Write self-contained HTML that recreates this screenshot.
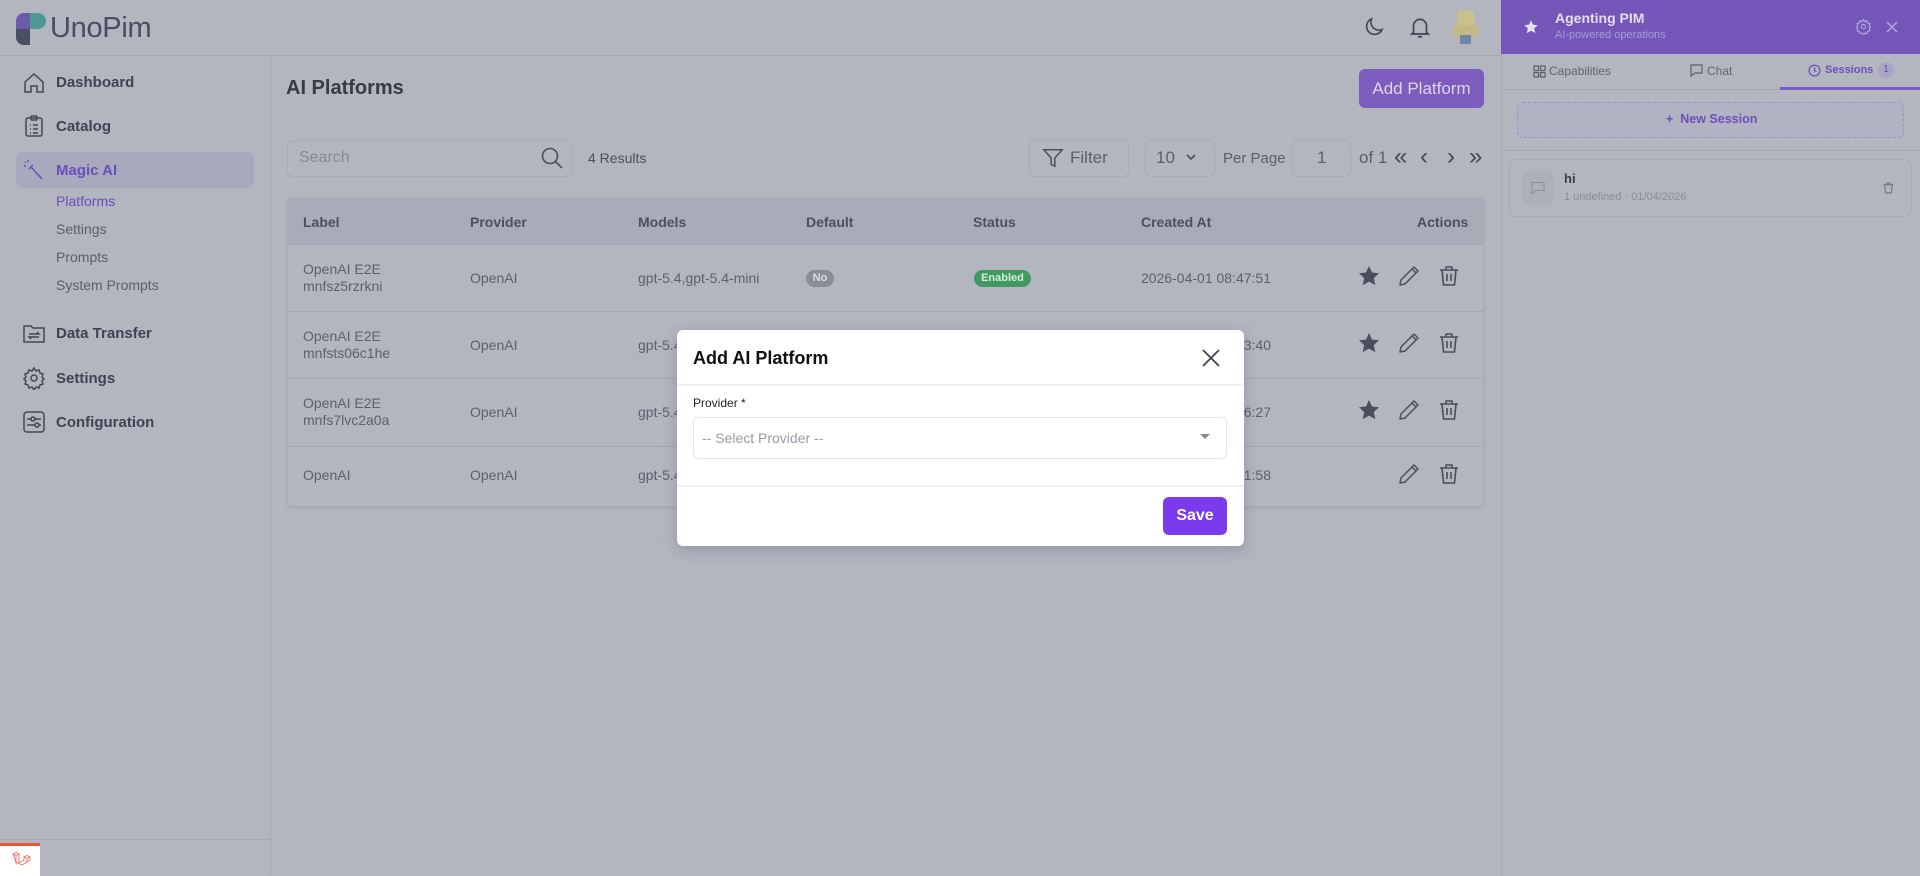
<!DOCTYPE html>
<html><head><meta charset="utf-8"><style>
*{box-sizing:border-box;margin:0;padding:0}
body{width:1920px;height:876px;overflow:hidden;background:#b3b5bf;font-family:"Liberation Sans",sans-serif;color:#474c5a;position:relative}
.a{position:absolute}
.t{white-space:nowrap}
svg{display:block}
.nav{position:absolute;left:56px;font-size:15px;color:#3f4452;font-weight:bold}
.sub{position:absolute;left:56px;font-size:14px;color:#5a5f6c}
.ic{position:absolute;left:22px}
.cell{position:absolute;font-size:14px;color:#5c616e;line-height:17px}
.hd{position:absolute;font-size:14px;font-weight:bold;color:#4b505d}
.box{position:absolute;border:1px solid #a8aab5;border-radius:6px}
</style></head><body>
<!-- header -->
<div class="a" style="left:0;top:55px;width:1501px;height:1px;background:#a6a8b3"></div>
<svg class="a" style="left:16px;top:13px" width="30" height="32" viewBox="0 0 30 32"><path d="M0 8a8 8 0 0 1 8-8h6v32H8a8 8 0 0 1-8-8z" fill="#6a5aa8"/><path d="M0 16h14v16H8a8 8 0 0 1-8-8z" fill="#4a4f62"/><path d="M14 0h8a8 8 0 0 1 0 16h-8z" fill="#4d9a92"/></svg>
<div class="a t" style="left:50px;top:12px;font-size:29px;color:#474e64;letter-spacing:-0.3px">UnoPim</div>
<svg class="a" style="left:1362px;top:15px" width="24" height="24" viewBox="0 0 24 24" fill="none" stroke="#3f4657" stroke-width="1.6"><path d="M20 14.5A8 8 0 0 1 9.5 4a8 8 0 1 0 10.5 10.5z"/></svg>
<svg class="a" style="left:1407px;top:14px" width="26" height="26" viewBox="0 0 24 24" fill="none" stroke="#3f4657" stroke-width="1.6"><path d="M6 17V11a6 6 0 0 1 12 0v6l1.5 1.5h-15z"/><path d="M10 21h4"/></svg>
<div class="a" style="left:1457px;top:11px;width:17px;height:15px;background:#c9c08a;border-radius:3px"></div>
<div class="a" style="left:1453px;top:25px;width:25px;height:11px;background:#c2b985;border-radius:3px"></div>
<div class="a" style="left:1460px;top:35px;width:11px;height:9px;background:#6f86a8"></div>

<!-- sidebar -->
<div class="a" style="left:270px;top:56px;width:1px;height:820px;background:#a9abb5;box-shadow:1px 0 3px #a9abb5"></div>
<div class="a" style="left:0;top:839px;width:270px;height:1px;background:#a6a8b3"></div>
<div class="a" style="left:0;top:843px;width:40px;height:33px;background:#fff;border-top:3px solid #e9523f"></div>
<svg class="a" style="left:11px;top:851px" width="20" height="20" viewBox="0 0 20 20" fill="none" stroke="#ef6a5a" stroke-width="0.9"><path d="M2 3l3-1.5 3 1.5v9l5-3v-3l3-1.5 3 1.5v3l-8 5-6-3zM2 3l3 1.5 3-1.5M5 4.5v9M13 6l3 1.5 3-1.5M16 7.5v3"/></svg>

<svg class="ic" style="top:71px" width="24" height="24" viewBox="0 0 24 24" fill="none" stroke="#434856" stroke-width="1.5"><path d="M3 11l9-8 9 8v10h-6v-6h-6v6H3z"/></svg>
<div class="nav t" style="top:74px">Dashboard</div>
<svg class="ic" style="top:114px" width="24" height="24" viewBox="0 0 24 24" fill="none" stroke="#434856" stroke-width="1.5"><rect x="4" y="4" width="16" height="18" rx="2"/><rect x="9" y="2" width="6" height="4" rx="1"/><path d="M8 11h1M11 11h5M8 15h1M11 15h5M8 19h1M11 19h5"/></svg>
<div class="nav t" style="top:118px">Catalog</div>
<div class="a" style="left:16px;top:152px;width:238px;height:36px;background:#a9a9bd;border-radius:7px"></div>
<svg class="ic" style="top:158px" width="24" height="24" viewBox="0 0 24 24" fill="none" stroke="#6b4fc0" stroke-width="1.5"><path d="M9 9l11 12M7 11l4-4M3 4l1 1M6 2v2M2 8h2"/></svg>
<div class="nav t" style="top:162px;color:#6b4dbf">Magic AI</div>
<div class="sub t" style="top:193px;color:#6b4dbf">Platforms</div>
<div class="sub t" style="top:221px">Settings</div>
<div class="sub t" style="top:249px">Prompts</div>
<div class="sub t" style="top:277px">System Prompts</div>
<svg class="ic" style="top:321px" width="24" height="24" viewBox="0 0 24 24" fill="none" stroke="#434856" stroke-width="1.5"><path d="M2 5h7l2 2h11v14H2z"/><path d="M7 13h10l-2-2M17 16H7l2 2"/></svg>
<div class="nav t" style="top:325px">Data Transfer</div>
<svg class="ic" style="top:366px" width="24" height="24" viewBox="0 0 24 24" fill="none" stroke="#434856" stroke-width="1.5"><circle cx="12" cy="12" r="3"/><path d="M12 2l2 3 3-1 1 3 3 1-1 3 2 2-2 2 1 3-3 1-1 3-3-1-2 3-2-3-3 1-1-3-3-1 1-3-2-2 2-2-1-3 3-1 1-3 3 1z"/></svg>
<div class="nav t" style="top:370px">Settings</div>
<svg class="ic" style="top:410px" width="24" height="24" viewBox="0 0 24 24" fill="none" stroke="#434856" stroke-width="1.5"><rect x="2" y="2" width="20" height="20" rx="3"/><path d="M5 9h4M13 9h6M5 15h8M17 15h2"/><circle cx="11" cy="9" r="2"/><circle cx="15" cy="15" r="2"/></svg>
<div class="nav t" style="top:414px">Configuration</div>

<!-- main -->
<div class="a t" style="left:286px;top:77px;font-size:20px;font-weight:bold;color:#363b49">AI Platforms</div>
<div class="a t" style="left:1359px;top:69px;width:125px;height:39px;background:#7c5cbc;border-radius:6px;color:#ddd6f0;font-size:17px;text-align:center;line-height:39px">Add Platform</div>
<div class="box" style="left:287px;top:140px;width:286px;height:37px"></div>
<div class="a t" style="left:299px;top:149px;font-size:16px;color:#878a96">Search</div>
<svg class="a" style="left:540px;top:146px" width="24" height="24" viewBox="0 0 24 24" fill="none" stroke="#4a4f5c" stroke-width="1.6"><circle cx="10" cy="10" r="7.5"/><path d="M15.5 15.5L22 22"/></svg>
<div class="a t" style="left:588px;top:150px;font-size:14px;color:#4a4f5c">4 Results</div>
<div class="box" style="left:1029px;top:139px;width:100px;height:38px"></div>
<svg class="a" style="left:1042px;top:147px" width="22" height="22" viewBox="0 0 24 24" fill="none" stroke="#4a4f5c" stroke-width="1.6"><path d="M2 3h20l-8 9v9l-4-2v-7z"/></svg>
<div class="a t" style="left:1070px;top:148px;font-size:17px;color:#5a5f6c">Filter</div>
<div class="box" style="left:1145px;top:139px;width:70px;height:38px"></div>
<div class="a t" style="left:1156px;top:148px;font-size:17px;color:#5a5f6c">10</div>
<svg class="a" style="left:1185px;top:152px" width="12" height="10" viewBox="0 0 12 10" fill="none" stroke="#4a4f5c" stroke-width="1.6"><path d="M2 3l4 4 4-4"/></svg>
<div class="a t" style="left:1223px;top:150px;font-size:15px;color:#5a5f6c">Per Page</div>
<div class="box" style="left:1292px;top:139px;width:59px;height:38px"></div>
<div class="a t" style="left:1317px;top:148px;font-size:17px;color:#5a5f6c">1</div>
<div class="a t" style="left:1359px;top:148px;font-size:17px;color:#5a5f6c">of 1</div>
<div class="a t" style="left:1394px;top:143px;font-size:24px;color:#434856">«</div>
<div class="a t" style="left:1420px;top:143px;font-size:24px;color:#434856">‹</div>
<div class="a t" style="left:1447px;top:143px;font-size:24px;color:#434856">›</div>
<div class="a t" style="left:1469px;top:143px;font-size:24px;color:#434856">»</div>

<div class="a" style="left:287px;top:198px;width:1197px;height:309px;border:1px solid #a8aab5;border-radius:4px;overflow:hidden;box-shadow:0 1px 3px #a4a6b0">
<div class="a" style="left:0;top:0;width:1197px;height:46px;background:#a9abb8;border-bottom:1px solid #a2a4af"></div>
<div class="a" style="left:0;top:112px;width:1197px;height:1px;background:#a4a6b1"></div>
<div class="a" style="left:0;top:179px;width:1197px;height:1px;background:#a4a6b1"></div>
<div class="a" style="left:0;top:247px;width:1197px;height:1px;background:#a4a6b1"></div>
</div>
<div class="hd t" style="left:303px;top:214px">Label</div>
<div class="hd t" style="left:470px;top:214px">Provider</div>
<div class="hd t" style="left:638px;top:214px">Models</div>
<div class="hd t" style="left:806px;top:214px">Default</div>
<div class="hd t" style="left:973px;top:214px">Status</div>
<div class="hd t" style="left:1141px;top:214px">Created At</div>
<div class="hd t" style="left:1417px;top:214px">Actions</div>

<div class="cell t" style="left:303px;top:261px">OpenAI E2E<br>mnfsz5rzrkni</div>
<div class="cell t" style="left:470px;top:270px">OpenAI</div>
<div class="cell t" style="left:638px;top:270px">gpt-5.4,gpt-5.4-mini</div>
<div class="a t" style="left:806px;top:270px;width:28px;height:17px;border-radius:9px;background:#8a8d99;color:#dcdde2;font-size:11px;font-weight:bold;text-align:center;line-height:17px">No</div>
<div class="a t" style="left:974px;top:270px;width:57px;height:17px;border-radius:9px;background:#3f9a62;color:#d7eadc;font-size:11px;font-weight:bold;text-align:center;line-height:17px">Enabled</div>
<div class="cell t" style="left:1141px;top:270px">2026-04-01 08:47:51</div>

<div class="cell t" style="left:303px;top:328px">OpenAI E2E<br>mnfsts06c1he</div>
<div class="cell t" style="left:470px;top:337px">OpenAI</div>
<div class="cell t" style="left:638px;top:337px">gpt-5.4</div>
<div class="cell t" style="left:1141px;top:337px">2026-04-01 08:43:40</div>

<div class="cell t" style="left:303px;top:395px">OpenAI E2E<br>mnfs7lvc2a0a</div>
<div class="cell t" style="left:470px;top:404px">OpenAI</div>
<div class="cell t" style="left:638px;top:404px">gpt-5.4</div>
<div class="cell t" style="left:1141px;top:404px">2026-04-01 08:26:27</div>

<div class="cell t" style="left:303px;top:467px">OpenAI</div>
<div class="cell t" style="left:470px;top:467px">OpenAI</div>
<div class="cell t" style="left:638px;top:467px">gpt-5.4</div>
<div class="cell t" style="left:1141px;top:467px">2026-04-01 08:21:58</div>

<!-- action icons -->
<svg width="0" height="0" style="position:absolute"><defs>
<symbol id="star" viewBox="0 0 24 24"><path d="M12 2l3 6.5 7 .8-5.2 4.8 1.5 7L12 17.6 5.7 21.1l1.5-7L2 9.3l7-.8z" fill="#4a4f5d"/></symbol>
<symbol id="pen" viewBox="0 0 24 24"><path d="M17 3l4 4L8 20l-5 1 1-5z M15 5l4 4" fill="none" stroke="#4a4f5d" stroke-width="1.5" stroke-linejoin="round"/></symbol>
<symbol id="trash" viewBox="0 0 24 24"><path d="M3 6h18M9 6V3h6v3M5 6l1.5 15h11L19 6M10 10v7M14 10v7" fill="none" stroke="#4a4f5d" stroke-width="1.6" stroke-linejoin="round"/></symbol>
</defs></svg>
<svg class="a" style="left:1357px;top:264px" width="24" height="24"><use href="#star"/></svg>
<svg class="a" style="left:1397px;top:264px" width="24" height="24"><use href="#pen"/></svg>
<svg class="a" style="left:1437px;top:264px" width="24" height="24"><use href="#trash"/></svg>
<svg class="a" style="left:1357px;top:331px" width="24" height="24"><use href="#star"/></svg>
<svg class="a" style="left:1397px;top:331px" width="24" height="24"><use href="#pen"/></svg>
<svg class="a" style="left:1437px;top:331px" width="24" height="24"><use href="#trash"/></svg>
<svg class="a" style="left:1357px;top:398px" width="24" height="24"><use href="#star"/></svg>
<svg class="a" style="left:1397px;top:398px" width="24" height="24"><use href="#pen"/></svg>
<svg class="a" style="left:1437px;top:398px" width="24" height="24"><use href="#trash"/></svg>
<svg class="a" style="left:1397px;top:462px" width="24" height="24"><use href="#pen"/></svg>
<svg class="a" style="left:1437px;top:462px" width="24" height="24"><use href="#trash"/></svg>

<!-- right panel -->
<div class="a" style="left:1501px;top:0;width:419px;height:876px;background:#b3b5bf;border-left:1px solid #a9abb5"></div>
<div class="a" style="left:1501px;top:0;width:419px;height:54px;background:#7356b8"></div>
<svg class="a" style="left:1523px;top:19px" width="16" height="16" viewBox="0 0 24 24"><path d="M12 2l3 6.5 7 .8-5.2 4.8 1.5 7L12 17.6 5.7 21.1l1.5-7L2 9.3l7-.8z" fill="#e4e0f0"/></svg>
<div class="a t" style="left:1555px;top:10px;font-size:14px;font-weight:bold;color:#e2def0">Agenting PIM</div>
<div class="a t" style="left:1555px;top:29px;font-size:11px;color:#a99bd6">AI-powered operations</div>
<svg class="a" style="left:1855px;top:18px" width="17" height="17" viewBox="0 0 24 24" fill="none" stroke="#b2a6dc" stroke-width="1.6"><circle cx="12" cy="12" r="3"/><path d="M12 2l2 3 3-1 1 3 3 1-1 3 2 2-2 2 1 3-3 1-1 3-3-1-2 3-2-3-3 1-1-3-3-1 1-3-2-2 2-2-1-3 3-1 1-3 3 1z"/></svg>
<svg class="a" style="left:1886px;top:21px" width="12" height="12" viewBox="0 0 12 12" stroke="#b2a6dc" stroke-width="1.5"><path d="M1 1l10 10M11 1L1 11"/></svg>
<div class="a" style="left:1501px;top:89px;width:419px;height:1px;background:#a6a8b3"></div>
<svg class="a" style="left:1533px;top:65px" width="13" height="13" viewBox="0 0 13 13" fill="none" stroke="#5a5f6c" stroke-width="1.2"><rect x="1" y="1" width="4.5" height="4.5"/><rect x="7.5" y="1" width="4.5" height="4.5"/><rect x="1" y="7.5" width="4.5" height="4.5"/><rect x="7.5" y="7.5" width="4.5" height="4.5"/></svg>
<div class="a t" style="left:1549px;top:64px;font-size:12px;color:#5f6471">Capabilities</div>
<svg class="a" style="left:1690px;top:64px" width="13" height="14" viewBox="0 0 13 14" fill="none" stroke="#5a5f6c" stroke-width="1.2"><path d="M1 1h11v8H5l-4 3z"/></svg>
<div class="a t" style="left:1707px;top:64px;font-size:12px;color:#5f6471">Chat</div>
<svg class="a" style="left:1808px;top:64px" width="13" height="13" viewBox="0 0 14 14" fill="none" stroke="#6b4fc0" stroke-width="1.3"><circle cx="7" cy="7" r="5.8"/><path d="M7 3.5V7l2 1.5"/></svg>
<div class="a t" style="left:1825px;top:64px;font-size:11px;font-weight:bold;color:#6b4fc0">Sessions</div>
<div class="a t" style="left:1878px;top:62px;width:16px;height:16px;border-radius:8px;background:#a8a6c2;color:#6b4fc0;font-size:10px;text-align:center;line-height:16px">1</div>
<div class="a" style="left:1780px;top:87px;width:140px;height:3px;background:#7a5cc8"></div>
<div class="a" style="left:1517px;top:102px;width:387px;height:36px;border:1px dashed #9d93c8;border-radius:6px;background:#b1b2c2"></div>
<div class="a t" style="left:1666px;top:112px;font-size:12.5px;font-weight:bold;color:#6b4fc0">+&nbsp;&nbsp;New Session</div>
<div class="a" style="left:1501px;top:150px;width:419px;height:1px;background:#a6a8b3"></div>
<div class="a" style="left:1509px;top:159px;width:403px;height:58px;border:1px solid #a8aab5;border-radius:8px"></div>
<div class="a" style="left:1522px;top:172px;width:32px;height:32px;border-radius:6px;background:#adafb9"></div>
<svg class="a" style="left:1531px;top:181px" width="14" height="14" viewBox="0 0 14 14" fill="none" stroke="#8c909c" stroke-width="1.1"><path d="M1 1.5h12v8H5l-4 3z"/></svg>
<div class="a t" style="left:1564px;top:171px;font-size:13px;font-weight:bold;color:#3a3f4c">hi</div>
<div class="a t" style="left:1564px;top:191px;font-size:11px;color:#8a8d98">1 undefined · 01/04/2026</div>
<svg class="a" style="left:1882px;top:181px" width="13" height="14" viewBox="0 0 24 24" fill="none" stroke="#6a6e7a" stroke-width="1.8"><path d="M3 6h18M9 6V3h6v3M5 6l1.5 15h11L19 6"/></svg>

<!-- modal -->
<div class="a" style="left:677px;top:330px;width:567px;height:216px;background:#fff;border-radius:6px;box-shadow:0 4px 14px rgba(60,60,80,.25)"></div>
<div class="a t" style="left:693px;top:348px;font-size:18px;font-weight:bold;color:#111">Add AI Platform</div>
<svg class="a" style="left:1201px;top:348px" width="20" height="20" viewBox="0 0 20 20" stroke="#3e4350" stroke-width="1.8"><path d="M2 2l16 16M18 2L2 18"/></svg>
<div class="a" style="left:677px;top:384px;width:567px;height:2px;background:#eef0f3"></div>
<div class="a t" style="left:693px;top:396px;font-size:12px;color:#222">Provider *</div>
<div class="a" style="left:693px;top:417px;width:534px;height:42px;border:1px solid #e4e6ea;border-radius:5px"></div>
<div class="a t" style="left:702px;top:430px;font-size:14px;color:#9a9da6">-- Select Provider --</div>
<svg class="a" style="left:1199px;top:433px" width="12" height="8" viewBox="0 0 12 8"><path d="M1 1h10L6 6z" fill="#888"/></svg>
<div class="a" style="left:677px;top:485px;width:567px;height:2px;background:#eef0f3"></div>
<div class="a t" style="left:1163px;top:497px;width:64px;height:38px;border-radius:6px;background:#7c3aed;color:#fff;font-size:16px;font-weight:bold;text-align:center;line-height:38px">Save</div>
</body></html>
